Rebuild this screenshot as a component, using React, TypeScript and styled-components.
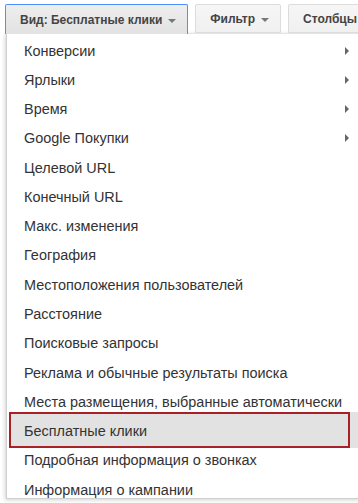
import styled, { createGlobalStyle } from "styled-components";

const items = [
  { label: "Конверсии", sub: true },
  { label: "Ярлыки", sub: true },
  { label: "Время", sub: true },
  { label: "Google Покупки", sub: true },
  { label: "Целевой URL" },
  { label: "Конечный URL" },
  { label: "Макс. изменения" },
  { label: "География" },
  { label: "Местоположения пользователей" },
  { label: "Расстояние" },
  { label: "Поисковые запросы" },
  { label: "Реклама и обычные результаты поиска" },
  { label: "Места размещения, выбранные автоматически" },
  { label: "Бесплатные клики", active: true },
  { label: "Подробная информация о звонках" },
  { label: "Информация о кампании" },
];

function App() {
  return (
    <>
      <GlobalStyle />
      <Page>
        <Toolbar>
          <ToolButton $open>
            Вид: Бесплатные клики <Caret />
          </ToolButton>
          <ToolButton>
            Фильтр <Caret />
          </ToolButton>
          <ToolButton>
            Столбцы <Caret />
          </ToolButton>
        </Toolbar>
        <Menu>
          {items.map((it) => (
            <MenuItem key={it.label} $active={it.active}>
              <Label>{it.label}</Label>
              {it.sub && <SubArrow />}
            </MenuItem>
          ))}
        </Menu>
      </Page>
    </>
  );
}

export default App;

const GlobalStyle = createGlobalStyle`
  body {
    margin: 0;
    background: #fff;
    font-family: Arial, "Liberation Sans", sans-serif;
    overflow: hidden;
  }
`;

const Page = styled.div`
  width: 358px;
  height: 503px;
  overflow: hidden;
`;

const Toolbar = styled.div`
  display: flex;
  gap: 7px;
  padding: 4px 0 0 5px;
  height: 33px;
  box-sizing: border-box;
  position: relative;
  z-index: 2;
`;

const ToolButton = styled.div<{ $open?: boolean }>`
  flex: none;
  height: ${(p) => (p.$open ? "30px" : "29px")};
  box-sizing: border-box;
  display: flex;
  align-items: center;
  gap: 6px;
  padding: 0 11px 0 14px;
  font-size: 12px;
  font-weight: bold;
  color: #444;
  white-space: nowrap;
  background: ${(p) =>
    p.$open ? "linear-gradient(#eeeeee, #e2e2e2)" : "linear-gradient(#f6f6f6, #f0f0f0)"};
  border: 1px solid ${(p) => (p.$open ? "#4d90fe" : "#dcdcdc")};
  border-bottom: ${(p) => (p.$open ? "none" : "1px solid #dcdcdc")};
  border-radius: 2px 2px 0 0;
`;

const Caret = styled.span`
  display: inline-block;
  width: 0;
  height: 0;
  border-left: 4px solid transparent;
  border-right: 4px solid transparent;
  border-top: 4px solid #777;
  margin-top: 2px;
`;

const Menu = styled.div`
  margin: 0 0 0 6px;
  width: 360px;
  height: 466px;
  box-sizing: border-box;
  background: #fff;
  border-left: 1px solid #d0d0d0;
  border-bottom: 1px solid #d0d0d0;
  border-top: 1px solid #e4e4e4;
  box-shadow: -1px 1px 4px rgba(0, 0, 0, 0.18);
  padding-top: 2px;
  display: flex;
  flex-direction: column;
`;

const MenuItem = styled.div<{ $active?: boolean }>`
  flex: none;
  height: 29.27px;
  display: flex;
  align-items: center;
  justify-content: space-between;
  padding: 0 0 0 17px;
  font-size: 14.45px;
  color: #333;
  white-space: nowrap;
  position: relative;
  isolation: isolate;

  ${(p) =>
    p.$active &&
    `
    &::before {
      content: "";
      position: absolute;
      left: 3px;
      right: 0;
      top: -4px;
      bottom: -2px;
      background: #e2e2e2;
      z-index: -1;
    }
    &::after {
      content: "";
      position: absolute;
      left: 2px;
      top: -4px;
      width: 341px;
      bottom: -2px;
      border: 2px solid #a82028;
      box-sizing: border-box;
    }
  `}
`;

const Label = styled.span`
  position: relative;
`;

const SubArrow = styled.span`
  width: 0;
  height: 0;
  border-top: 4px solid transparent;
  border-bottom: 4px solid transparent;
  border-left: 4px solid #666;
  margin-right: 17px;
`;
